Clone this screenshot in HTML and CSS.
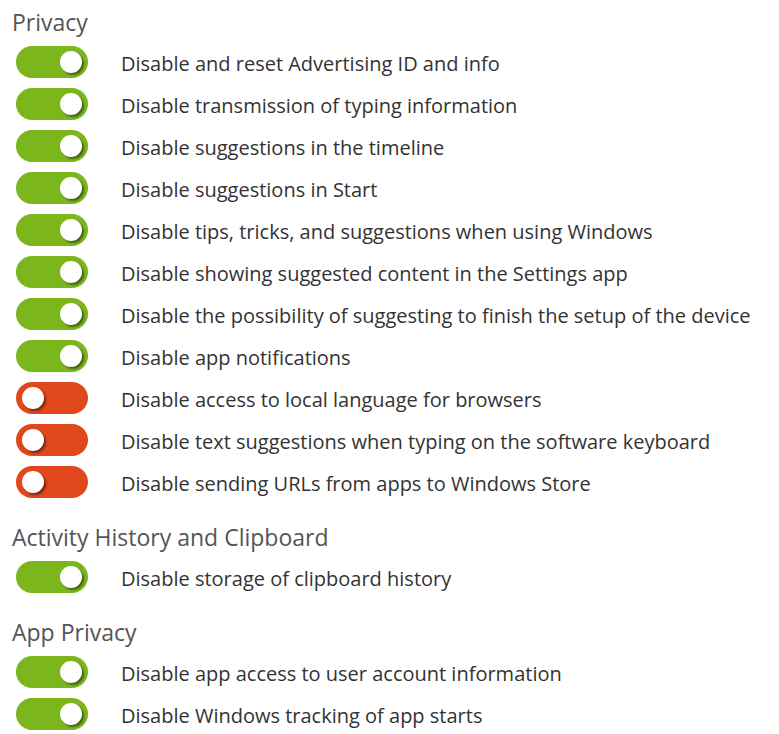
FILE: index.html
```
<!DOCTYPE html>
<html>
<head>
<meta charset="utf-8">
<link rel="stylesheet" href="styles.css">
</head>
<body>
<div class="page">
  <section class="group">
    <h2 class="heading first">Privacy</h2>
    <div class="row"><span class="toggle on"><span class="knob"></span></span><span class="label">Disable and reset Advertising ID and info</span></div>
    <div class="row"><span class="toggle on"><span class="knob"></span></span><span class="label">Disable transmission of typing information</span></div>
    <div class="row"><span class="toggle on"><span class="knob"></span></span><span class="label">Disable suggestions in the timeline</span></div>
    <div class="row"><span class="toggle on"><span class="knob"></span></span><span class="label">Disable suggestions in Start</span></div>
    <div class="row"><span class="toggle on"><span class="knob"></span></span><span class="label">Disable tips, tricks, and suggestions when using Windows</span></div>
    <div class="row"><span class="toggle on"><span class="knob"></span></span><span class="label">Disable showing suggested content in the Settings app</span></div>
    <div class="row"><span class="toggle on"><span class="knob"></span></span><span class="label">Disable the possibility of suggesting to finish the setup of the device</span></div>
    <div class="row"><span class="toggle on"><span class="knob"></span></span><span class="label">Disable app notifications</span></div>
    <div class="row"><span class="toggle off"><span class="knob"></span></span><span class="label">Disable access to local language for browsers</span></div>
    <div class="row"><span class="toggle off"><span class="knob"></span></span><span class="label">Disable text suggestions when typing on the software keyboard</span></div>
    <div class="row"><span class="toggle off"><span class="knob"></span></span><span class="label">Disable sending URLs from apps to Windows Store</span></div>
  </section>
  <section class="group">
    <h2 class="heading">Activity History and Clipboard</h2>
    <div class="row"><span class="toggle on"><span class="knob"></span></span><span class="label">Disable storage of clipboard history</span></div>
  </section>
  <section class="group">
    <h2 class="heading">App Privacy</h2>
    <div class="row"><span class="toggle on"><span class="knob"></span></span><span class="label">Disable app access to user account information</span></div>
    <div class="row"><span class="toggle on"><span class="knob"></span></span><span class="label">Disable Windows tracking of app starts</span></div>
  </section>
</div>
</body>
</html>
```
FILE: styles.css
```
html, body {
  margin: 0;
  padding: 0;
  background: #ffffff;
}
.page {
  font-family: "Open Sans", "Noto Sans", sans-serif;
  padding-top: 3px;
}
.group {
  margin-top: 15px;
}
.group:first-child {
  margin-top: 0;
}
.heading {
  margin: 0;
  padding-left: 12px;
  font-size: 23px;
  font-weight: 400;
  line-height: 38px;
  color: #555555;
}
.row {
  display: flex;
  align-items: center;
  height: 42px;
  padding-left: 16px;
}
.toggle {
  flex: none;
  display: flex;
  align-items: center;
  width: 72px;
  height: 32px;
  border-radius: 16px;
  box-sizing: border-box;
  padding: 0 6px;
}
.toggle.on {
  background: #7cb61d;
  justify-content: flex-end;
}
.toggle.off {
  background: #e0471b;
  justify-content: flex-start;
}
.knob {
  width: 22px;
  height: 22px;
  border-radius: 50%;
  background: #ffffff;
  box-shadow: 2px 2px 2px rgba(0, 0, 0, 0.45);
}
.label {
  margin-left: 33px;
  font-size: 20px;
  line-height: 26px;
  padding-top: 3px;
  color: #333333;
  white-space: nowrap;
}
```
